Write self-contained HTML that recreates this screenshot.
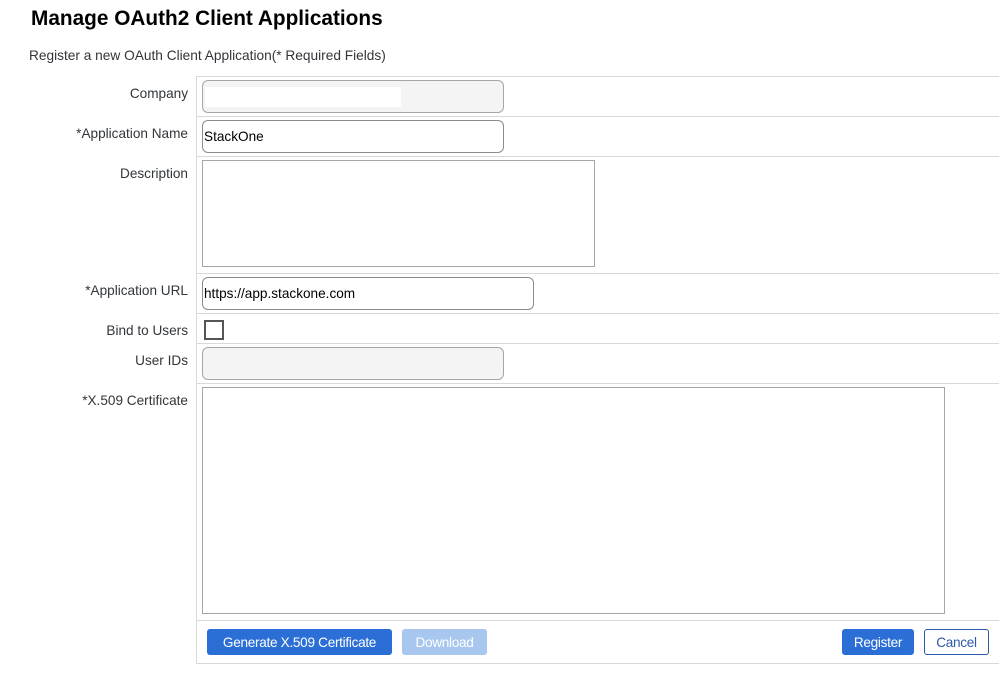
<!DOCTYPE html>
<html><head><meta charset="utf-8"><style>
body{margin:0;width:1006px;height:693px;background:#fff;font-family:"Liberation Sans",sans-serif;position:relative;overflow:hidden;color:#32363a}
.a{position:absolute}
h1{position:absolute;left:31px;top:7px;margin:0;font-size:20.8px;font-weight:bold;color:#000}
.sub{left:29px;top:48px;font-size:13.7px}
.hl{position:absolute;left:196px;width:803px;height:1px;background:#d9d9d9}
.vl{position:absolute;left:196px;top:76px;width:1px;height:588px;background:#d9d9d9}
.lbl{position:absolute;right:818px;font-size:13.6px;text-align:right;white-space:nowrap}
.in{position:absolute;box-sizing:border-box;border:1px solid #8c8c8c;border-radius:6px;background:#fff;font-size:13.6px;color:#000;padding-left:1px;display:flex;align-items:center}
.ro{background:#f4f4f4;border-color:#a6a6a6}
.ta{position:absolute;box-sizing:border-box;border:1px solid #a6a6a6;background:#fff}
.btn{position:absolute;top:629px;height:26px;box-sizing:border-box;border-radius:3px;font-size:13.6px;display:flex;align-items:center;justify-content:center;color:#fff;background:#2b6fd6;letter-spacing:-0.3px}
</style></head><body>
<h1>Manage OAuth2 Client Applications</h1>
<div class="a sub">Register a new OAuth Client Application(* Required Fields)</div>
<div class="vl"></div>
<div class="hl" style="top:76px"></div>
<div class="hl" style="top:116px"></div>
<div class="hl" style="top:156px"></div>
<div class="hl" style="top:273px"></div>
<div class="hl" style="top:313px"></div>
<div class="hl" style="top:343px"></div>
<div class="hl" style="top:383px"></div>
<div class="hl" style="top:620px"></div>
<div class="hl" style="top:663px"></div>

<div class="lbl" style="top:86px">Company</div>
<div class="lbl" style="top:126px">*Application Name</div>
<div class="lbl" style="top:166px">Description</div>
<div class="lbl" style="top:283px">*Application URL</div>
<div class="lbl" style="top:323px">Bind to Users</div>
<div class="lbl" style="top:353px">User IDs</div>
<div class="lbl" style="top:393px">*X.509 Certificate</div>

<div class="in ro" style="left:202px;top:80px;width:302px;height:33px"><span style="display:block;width:196px;height:20px;background:#fff;margin-left:1px"></span></div>
<div class="in" style="left:202px;top:120px;width:302px;height:33px">StackOne</div>
<div class="ta" style="left:202px;top:160px;width:393px;height:107px"></div>
<div class="in" style="left:202px;top:277px;width:332px;height:33px">https://app.stackone.com</div>
<div class="a" style="left:204px;top:320px;width:20px;height:20px;box-sizing:border-box;border:2px solid #555"></div>
<div class="in ro" style="left:202px;top:347px;width:302px;height:33px"></div>
<div class="ta" style="left:202px;top:387px;width:743px;height:227px"></div>

<div class="btn" style="left:207px;width:185px">Generate X.509 Certificate</div>
<div class="btn" style="left:402px;width:85px;background:#a7c7ef">Download</div>
<div class="btn" style="left:842px;width:72px">Register</div>
<div class="btn" style="left:924px;width:65px;background:#fff;color:#2b5aa8;border:1px solid #2b5aa8">Cancel</div>
</body></html>
